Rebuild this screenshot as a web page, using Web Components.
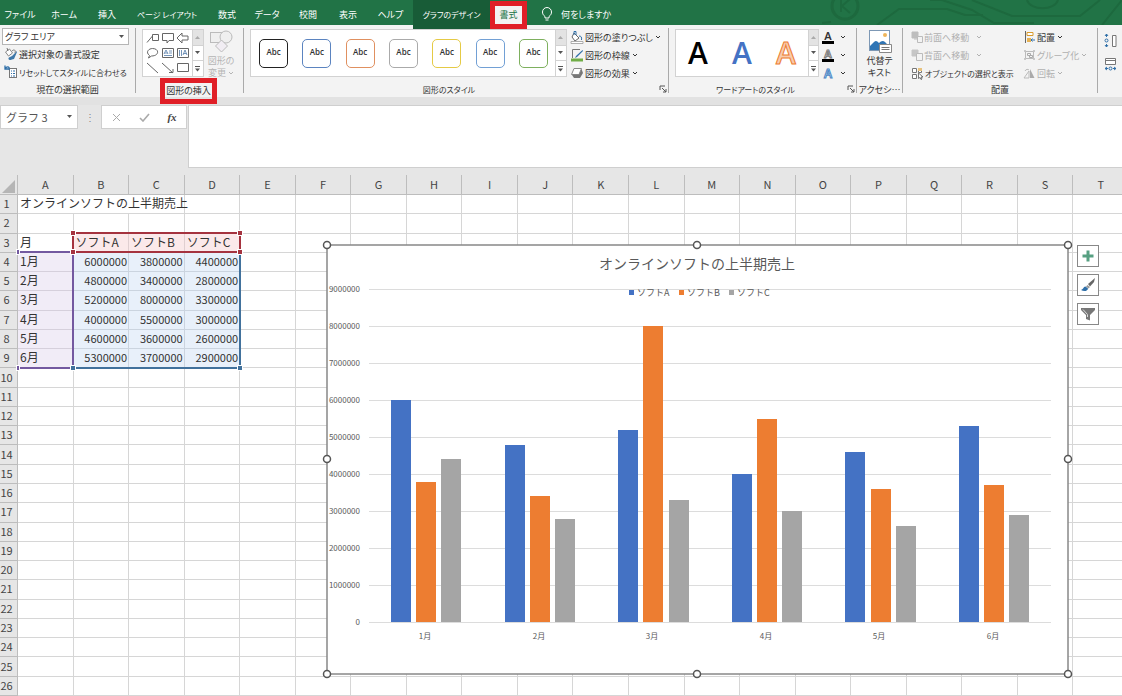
<!DOCTYPE html>
<html lang="ja">
<head>
<meta charset="utf-8">
<title>オンラインソフトの上半期売上</title>
<style>
  html { height: 100%; }
  body {
    margin: 0; min-height: 100%; display: flex; flex-direction: column; overflow: hidden;
    font-family: "Noto Sans CJK JP", sans-serif; font-size: 10px; color: #333; background: #fff;
  }
</style>
</head>
<body>
<tab-strip></tab-strip>
<ribbon-bar></ribbon-bar>
<formula-bar></formula-bar>
<work-sheet></work-sheet>

<script>
function define(name, css, html) {
  const template = document.createElement('template');
  customElements.define(name, class extends HTMLElement {
    constructor() {
      super();
      template.innerHTML = '<style>*{box-sizing:border-box}button,input,select{font:inherit;color:inherit;margin:0;border:0;background:none;padding:0;font-feature-settings:inherit}' + css + '</style>' + (typeof html === 'function' ? html(this) : html);
      this.attachShadow({ mode: 'open' }).append(template.content.cloneNode(true));
    }
  });
}

/* ---------- icons ---------- */
const ICONS = {
  bulb: [12, 16, '<path d="M4 11V9.500C2 8 1.500 6.500 1.500 5a4.500 4.500 0 0 1 9 0c0 1.500-.5 3-2.500 4.500V11z M4.500 13h3" fill="none" stroke="#fff"/>'],
  chevron: [6, 5, '<path d="M1 1l2 2 2-2" fill="none" stroke="currentColor"/>'],
  down: [6, 4, '<path d="M0 0h5L2.500 3z" fill="#555"/>'],
  up: [6, 4, '<path d="M0 3h5L2.500 0z" fill="#aaa"/>'],
  more: [6, 6, '<path d="M0 .5h5" stroke="#555"/><path d="M0 2.500h5L2.500 5.500z" fill="#555"/>'],
  format: [14, 14, '<path d="M1.500 5l4-3 3 4-4 3z" fill="#fff" stroke="#888"/><path d="M3 1l1 3" stroke="#777"/><path d="M13 4l-5 5-2 1 0 3 4-1 3-7z" fill="#3f78a8"/><path d="M8 4c2-2 4-1 3 2" stroke="#777" fill="none"/><circle cx="6" cy="11.500" r="1.500" fill="#3f78a8"/>'],
  reset: [14, 14, '<rect x="5.500" y="3.500" width="7" height="9" fill="#fff" stroke="#777"/><path d="M7 6h1M7 8.500h1M7 11h1M9 6h2M9 8.500h2M9 11h2" stroke="#2f6fa8"/><path d="M5 5C6 2 4 1 1.500 3M1 .5V4h3.500" fill="none" stroke="#2f6fa8" stroke-width="1.300"/>'],
  changeShape: [24, 24, '<rect x="1.500" y="2.500" width="12" height="10" fill="#efefef" stroke="#bbb"/><circle cx="17" cy="7" r="6" fill="#efefef" stroke="#bbb"/><path d="M12.500 10l6 6-6 6-6-6z" fill="#f1edf3" stroke="#bbb"/>'],
  launcher: [8, 8, '<path d="M1 5V1h5M3 3l4 4M7 4v3H4" fill="none" stroke="#555"/>'],
  fill: [14, 14, '<path d="M4 3l5 5-4 3-3-4z" fill="#fff" stroke="#666"/><path d="M4 5V1.500h2V5M9 6c2 0 3 1 2.500 4" fill="none" stroke="#2f6fa8"/><path d="M1 11.500h12v2H1z" fill="#fff" stroke="#999" stroke-width=".8"/>'],
  outline: [14, 14, '<path d="M2.500 10V1.500H10" fill="none" stroke="#777"/><path d="M12.500 2L6 8l-1 2 2-1 6-6z" fill="#2f6fa8"/><path d="M1 10.500h12v3H1z" fill="#70ad47"/>'],
  effect: [14, 12, '<path d="M2 8l3-6h6.500L13 6l-3 5H4z" fill="#777"/><path d="M1.500 7.500l2.500-6h7.500l-2.500 6z" fill="#fff" stroke="#888"/>'],
  altText: [26, 26, '<rect x="2.500" y="1.500" width="20" height="20" fill="#fff" stroke="#7d98b5"/><circle cx="18" cy="6" r="2" fill="#efb55a"/><path d="M3 21v-4l4-4c2-2 3-1 5 1 2-2 4-3 6-1l3 3v5z" fill="#2f75b5"/><path d="M12.500 15.500h12v8h-12z" fill="#fff" stroke="#888"/><path d="M14.500 18.500h8M14.500 20.500h8" stroke="#777"/>'],
  front: [12, 12, '<path d="M1 1h6v6H1zM3 8h3" fill="#bdbdbd" stroke="#bdbdbd"/><path d="M6.500 5.500h5v6h-5z" fill="#f3f3f3" stroke="#bbb"/>'],
  back: [12, 12, '<path d="M1 1h6v6H1z" fill="#c6c6c6" stroke="#c6c6c6"/><path d="M5.500 4.500h6v7h-6z" fill="#f3f3f3" stroke="#bbb"/>'],
  pane: [13, 13, '<path d="M1.500 1.500h4v4h-4zM7.500 2.500h3v3h-3zM1.500 7.500h4v4h-4z" fill="#fff" stroke="#777"/><path d="M7 1h4v3H7z" fill="#e7c27d"/><path d="M7.500 6v5.500l1.500-1 1 2 1-.5-1-2h2z" fill="#fff" stroke="#555" stroke-width=".8"/>'],
  align: [13, 12, '<path d="M2.500 0v12" stroke="#666"/><path d="M4 1.500h6v3H4z" fill="#fff" stroke="#d99a2b"/><path d="M4 7h4v4H4z" fill="#e7b254"/><path d="M12 9H8l1.500-1.500M8 9l1.500 1.500" fill="none" stroke="#2f6fa8"/>'],
  group: [13, 12, '<path d="M2.500 2.500h8v7h-8z" fill="none" stroke="#bbb"/><path d="M4.500 4.500h3v2h-3zM6.500 6.500h3v2h-3z" fill="none" stroke="#aaa"/><path d="M1.500 1.500h1v1h-1zM10.500 1.500h1v1h-1zM1.500 9.500h1v1h-1zM10.500 9.500h1v1h-1z" fill="#f3f3f3" stroke="#bbb"/>'],
  rotate: [13, 11, '<path d="M1 10h5V3z" fill="#f3f3f3" stroke="#bbb"/><path d="M7 10h4.500L7 1z" fill="#aaa"/><path d="M2 3c1-2 3-2 4-1" fill="none" stroke="#bbb"/>'],
  heightSize: [13, 15, '<path d="M2.500 1v3M1 3l1.500-2L4 3M2.500 11v3M1 12l1.500 2L4 12" fill="none" stroke="#2f6fa8"/><circle cx="2.500" cy="7.500" r="1.500" fill="none" stroke="#2f6fa8"/><path d="M8.500 2.500h3.500v11H8.500z" fill="#fff" stroke="#777"/>'],
  widthSize: [13, 15, '<path d="M1.500 1.500h10v6h-10zM1.500 3.500h10" fill="#fff" stroke="#777"/><path d="M1 11.500h3M9 11.500h3M3 10l-2 1.500L3 13M10 10l2 1.500-2 1.500" fill="none" stroke="#2f6fa8"/><circle cx="6.500" cy="11.500" r="1.500" fill="none" stroke="#2f6fa8"/>'],
  cancel: [9, 9, '<path d="M1 1l7 7M8 1L1 8" stroke="#aaa"/>'],
  check: [11, 9, '<path d="M1 5l3 3 6-7" fill="none" stroke="#aaa" stroke-width="1.600"/>'],
  plus: [14, 14, '<path d="M5.500 1.500h3v4h4v3h-4v4h-3v-4h-4v-3h4z" fill="#57a082"/>'],
  brush: [16, 16, '<path d="M15 1L8 7l2 2.500L14 5z" fill="#666"/><path d="M7.500 8L10 10 8.500 11.500 6 9.500z" fill="#999"/><path d="M5.500 9.500C3 10 4 12 1 13c3 2 7 1 7-1.500z" fill="#2f6fa8"/>'],
  filter: [16, 14, '<path d="M1 1h14v2L10 8v5.500L6 12V8L1 3z" fill="#777"/><path d="M3 2.500L7.500 7.500V10" fill="none" stroke="#ddd"/>'],
  lineCallout: [14, 12, '<path d="M6.500 2.500h6v6h-6zM6.500 4L1 10.500" fill="none" stroke="#666"/>'],
  rectCallout: [14, 12, '<path d="M1.500 1.500h11v7H8l-2 2.500V8.500H1.500z" fill="none" stroke="#666"/>'],
  arrowLeft: [14, 12, '<path d="M1 6l5-5v3h6v4H6v3z" fill="none" stroke="#666"/>'],
  bubble: [14, 12, '<path d="M3.500 8.500C-1 5 3 1.500 6.500 1.500c7 0 7 7.500-1 7.500L2.500 11z" fill="none" stroke="#666"/>'],
  textBox: [14, 12, '<path d="M1.500 1.500h11v9h-11z" fill="#fff" stroke="#666"/><path d="M3 7l2-4 2 4M3.500 6h3M8 4h3M8 6h3M3 8.500h8" fill="none" stroke="#537ba8" stroke-width=".8"/>'],
  verticalText: [14, 12, '<path d="M1.500 1.500h11v9h-11z" fill="#fff" stroke="#666"/><path d="M7 8l2-5 2 5M7.500 6.500h3M3.500 3v6M5.500 3v6" fill="none" stroke="#537ba8" stroke-width=".8"/>'],
  line: [14, 12, '<path d="M1 1l11 10" stroke="#666"/>'],
  lineArrow: [14, 12, '<path d="M1 1l11 10M8 10.500h4V7" fill="none" stroke="#666"/>'],
  rect: [14, 12, '<path d="M1.500 1.500h11v8h-11z" fill="none" stroke="#666"/>']
};
define('ui-icon', ':host{display:inline-flex;flex:none}svg{display:block}', el => {
  const [w, h, body] = ICONS[el.getAttribute('name')];
  return `<svg width="${w}" height="${h}" viewBox="0 0 ${w} ${h}" aria-hidden="true">${body}</svg>`;
});

/* ---------- tab strip ---------- */
define('tab-strip', `
  :host{display:block;position:relative;height:25px;flex:none;background:#217346;color:#fff;font-size:9px;font-feature-settings:"palt";z-index:2}
  .art{position:absolute;right:0;top:0}
  nav{position:relative;display:grid;grid-template-columns:40px 48px 38px 82px 38px 42px 40px 40px 45px 77px 37px auto;height:25px}
  button{display:flex;align-items:center;justify-content:center;white-space:nowrap}
  .kana{font-size:8px}
  .context{background:#185c37}
  .active{background:#f3f3f3;color:#217346;border:5px solid #e01f27;height:28px;margin-top:1px;padding-bottom:2px}
  .ask{justify-content:flex-start;gap:8px;padding-left:14px}
`, `
  <svg class="art" width="300" height="25" aria-hidden="true"><g fill="none" stroke="#1d693e" stroke-width="3">
    <circle cx="23" cy="6" r="13"/><path d="M19-1v13M28-1l-8 7 8 7" stroke-width="2"/><path d="M0 23l9-1M55 25l22-16h48l18 6h18M108 0h12l30 10 22 13h40M150 0l40 16h68l20-16M205 0c3 11 28 11 31 0M280 25l20-25" stroke-width="2"/></g></svg>
  <nav aria-label="リボン">
    <button>ファイル</button><button>ホーム</button><button>挿入</button><button class="kana">ページ レイアウト</button><button>数式</button><button>データ</button><button>校閲</button><button>表示</button><button>ヘルプ</button><button class="context kana">グラフのデザイン</button><button class="active">書式</button><button class="ask"><ui-icon name="bulb"></ui-icon>何をしますか</button>
  </nav>`);

/* ---------- ribbon parts ---------- */
define('ribbon-group', `
  :host{display:flex;flex-direction:column;flex:none;box-sizing:border-box;position:relative;border-right:1px solid #aaa;margin:3px 0 4px}
  .content{height:54px;flex:none;display:flex;align-items:flex-start}
  .label{flex:none;height:16px;line-height:16px;white-space:nowrap;display:flex;justify-content:center}
  :host([marked]) .label{width:57px;height:26px;border:5px solid #e01f27;margin:-4px 0 -10px 24px;line-height:16px}
  :host([launcher]) .label{font-size:8px;padding-right:14px}
  .launch{position:absolute;right:1px;bottom:0;line-height:0}
  :host(:not([launcher])) .launch{display:none}
`, el => `<div class="content"><slot></slot></div><div class="label">${el.getAttribute('label') || ''}</div>
  <button class="launch" aria-label="詳細"><ui-icon name="launcher"></ui-icon></button>`);

define('tool-button', `
  :host{display:block}
  button{display:flex;align-items:center;gap:1px;height:18px;white-space:nowrap}
  button:disabled{color:#b0b0b0}
  .arrow{margin-left:var(--arrow-gap,1px)}
  :host(:not([menu])) .arrow{display:none}
`, el => `<button ${el.hasAttribute('off') ? 'disabled' : ''}><ui-icon name="${el.getAttribute('icon')}"></ui-icon><slot></slot><ui-icon class="arrow" name="chevron"></ui-icon></button>`);

define('gallery-box', `
  :host{display:flex;box-sizing:border-box;border:1px solid #d2d2d2;background:#fff;height:48px;flex:none}
  .items{flex:1;display:flex;align-items:center}
  .scroll{width:11px;display:grid;grid-template-rows:16px 15px 15px;border-left:1px solid #d2d2d2}
  button{display:flex;align-items:center;justify-content:center;border-bottom:1px solid #d2d2d2}
  button:first-child{background:#e3e3e3}button:last-child{border:0}
`, `<div class="items"><slot></slot></div><div class="scroll">
  <button aria-label="前へ"><ui-icon name="up"></ui-icon></button><button aria-label="次へ"><ui-icon name="down"></ui-icon></button><button aria-label="その他"><ui-icon name="more"></ui-icon></button></div>`);

define('style-tile', `:host{display:block}
  button{width:29px;height:29px;border:1px solid var(--c);border-radius:5px;background:#fff;font:600 8px "Open Sans",sans-serif;color:#333;display:flex;align-items:center;justify-content:center;padding-bottom:3px}`,
  '<button>Abc</button>');

define('text-style', `:host{display:block}
  button{display:flex;align-items:center;gap:6px;height:18px}
  span{display:flex;flex-direction:column;align-items:center;width:12px;height:13px;font:600 11px/10px "Noto Sans",sans-serif;border-bottom:3px solid #000}
  .hollow{color:#fff;-webkit-text-stroke:1px #777}.glow{color:#fff;-webkit-text-stroke:1px #4a86c5;border:0;font-size:12px;line-height:13px}`,
  el => `<button aria-label="${el.getAttribute('label')}"><span class="${el.getAttribute('kind')}">A</span><ui-icon name="chevron"></ui-icon></button>`);

/* ---------- ribbon ---------- */
define('ribbon-bar', `
  :host{display:flex;position:relative;z-index:1;flex:none;height:72px;background:#f3f3f3;border-bottom:8px solid #e2e2e2;font-feature-settings:"palt";font-size:9px}
  .col{display:flex;flex-direction:column;flex:none}
  .select{position:relative;width:127px;height:17px;margin-left:2px}
  .select select{appearance:none;width:100%;height:100%;border:1px solid #b5b5b5;background:#fff;padding-left:2px}
  .select ui-icon{position:absolute;right:4px;top:7px}
  .first tool-button{margin-left:4px}
  .kana{font-size:8px}
  .g1{width:136px}.g2{width:108px}.g3{width:425px}.g4{width:188px}.g5{width:46px}.g6{width:195px}.g7{flex:1;border:0;overflow:hidden}
  .shapes{width:62px;margin:1px 0 0 6px}
  .grid{display:grid;grid-template-columns:repeat(3,15px);grid-template-rows:repeat(3,15px);padding-left:3px;align-items:center}
  .grid button{display:flex}
  .change{display:flex;flex-direction:column;align-items:center;margin-left:3px;color:#b5b5b5;line-height:12px;width:28px;text-align:left;padding-top:2px}
  .change ui-icon{margin-bottom:1px}
  .change span{display:block;white-space:nowrap}
  .styles{width:317px;margin:1px 0 0 6px}
  .tiles{display:grid;grid-template-columns:repeat(7,29px);justify-content:space-between;width:289px;margin-left:8px}
  .fx{margin-left:3px}
  .art{width:144px;margin:1px 0 0 6px}
  .letters{display:grid;grid-template-columns:repeat(3,44px);font:600 30px/44px "Open Sans",sans-serif}
  .letters button{height:44px;color:#000}
  .letters .blue{color:#4472c4}.letters .orange{color:#f8cbad;-webkit-text-stroke:1px #ed7d31}
  .alt{display:flex;flex-direction:column;align-items:center;line-height:12px;width:45px;padding-top:1px}
  .arr{width:120px;padding-left:8px;--arrow-gap:6px}
  .last{display:grid;grid-template-columns:13px 40px;gap:6px;row-gap:6px;padding:3px 0 0 6px;align-items:center}
  .last input{width:40px;height:18px;border:1px solid #b5b5b5;background:#fff}
`, `
  <ribbon-group class="g1" label="現在の選択範囲"><div class="col first">
    <div class="select"><select aria-label="グラフ要素"><option>グラフ エリア</option></select><ui-icon name="down"></ui-icon></div>
    <tool-button icon="format">選択対象の書式設定</tool-button>
    <tool-button class="kana" icon="reset">リセットしてスタイルに合わせる</tool-button></div></ribbon-group>
  <ribbon-group class="g2" label="図形の挿入" marked>
    <gallery-box class="shapes"><div class="grid">${['lineCallout','rectCallout','arrowLeft','bubble','textBox','verticalText','line','lineArrow','rect'].map(n => `<button aria-label="${n}"><ui-icon name="${n}"></ui-icon></button>`).join('')}</div></gallery-box>
    <button class="change" disabled><ui-icon name="changeShape"></ui-icon><span>図形の</span><span>変更 <ui-icon name="chevron"></ui-icon></span></button></ribbon-group>
  <ribbon-group class="g3" label="図形のスタイル" launcher>
    <gallery-box class="styles"><div class="tiles">${['#222','#5b84c0','#e09060','#aaa','#e5ca45','#72a0d5','#7eb05e'].map(c => `<style-tile style="--c:${c}"></style-tile>`).join('')}</div></gallery-box>
    <div class="col fx"><tool-button icon="fill" menu>図形の塗りつぶし</tool-button><tool-button icon="outline" menu>図形の枠線</tool-button><tool-button icon="effect" menu>図形の効果</tool-button></div></ribbon-group>
  <ribbon-group class="g4" label="ワードアートのスタイル" launcher>
    <gallery-box class="art"><div class="letters"><button>A</button><button class="blue">A</button><button class="orange">A</button></div></gallery-box>
    <div class="col fx"><text-style label="文字の塗りつぶし"></text-style><text-style kind="hollow" label="文字の輪郭"></text-style><text-style kind="glow" label="文字の効果"></text-style></div></ribbon-group>
  <ribbon-group class="g5" label="アクセシ…"><button class="alt"><ui-icon name="altText"></ui-icon><span>代替テ<br>キスト</span></button></ribbon-group>
  <ribbon-group class="g6" label="配置">
    <div class="col arr"><tool-button icon="front" off menu>前面へ移動</tool-button><tool-button icon="back" off menu>背面へ移動</tool-button><tool-button class="kana" icon="pane">オブジェクトの選択と表示</tool-button></div>
    <div class="col"><tool-button icon="align" menu>配置</tool-button><tool-button icon="group" off menu>グループ化</tool-button><tool-button icon="rotate" off menu>回転</tool-button></div></ribbon-group>
  <ribbon-group class="g7"><div class="last"><ui-icon name="heightSize"></ui-icon><input aria-label="高さ"><ui-icon name="widthSize"></ui-icon><input aria-label="幅"></div></ribbon-group>`);

/* ---------- formula bar ---------- */
define('formula-bar', `
  :host{display:flex;flex:none;height:70px;background:#e6e6e6;align-items:flex-start}
  .name{display:flex;align-items:center;width:78px;height:24px;background:#fff;border:1px solid #cfcfcf;padding:0 4px 0 5px}
  .name input{flex:1;width:0;font-size:11px;color:#555}
  .dots{width:23px;text-align:center;line-height:24px;color:#888}
  .actions{display:grid;grid-template-columns:repeat(3,28px);height:24px;width:86px;background:#fff;border:1px solid #cfcfcf}
  .actions button{display:flex;align-items:center;justify-content:center}
  .actions .fx{font:italic 700 11px "Liberation Serif",serif;color:#444}
  .value{flex:1;height:63px;margin-left:1px;background:#fff;border:1px solid #cfcfcf;border-right:0;resize:none;outline:0}
`, `<div class="name"><input aria-label="名前ボックス" value="グラフ 3"><ui-icon name="down"></ui-icon></div><div class="dots">⋮</div>
  <div class="actions"><button aria-label="キャンセル"><ui-icon name="cancel"></ui-icon></button><button aria-label="入力"><ui-icon name="check"></ui-icon></button><button class="fx">fx</button></div>
  <textarea class="value" aria-label="数式バー"></textarea>`);

/* ---------- chart ---------- */
const MONTHS = ['1月','2月','3月','4月','5月','6月'];
const SERIES = [
  ['ソフトA', '#4472c4', [6000000,4800000,5200000,4000000,4600000,5300000]],
  ['ソフトB', '#ed7d31', [3800000,3400000,8000000,5500000,3600000,3700000]],
  ['ソフトC', '#a5a5a5', [4400000,2800000,3300000,3000000,2600000,2900000]]
];
function chartMarkup() {
  const base = 377, unit = 37 / 1e6 * 0.9985, left = 42, step = 113.6;
  let s = '';
  for (let i = 0; i <= 9; i++) {
    const y = Math.round(base - i * 1e6 * unit);
    s += `<path d="M${left} ${y + .5}H724" stroke="#dcdcdc"/><text x="33" y="${y + 3}" text-anchor="end" font-size="8">${i * 1e6}</text>`;
  }
  MONTHS.forEach((m, i) => {
    SERIES.forEach(([, color, values], k) => {
      const h = Math.round(values[i] * unit);
      s += `<rect x="${Math.round(64 + i * step + k * 25.2)}" y="${base - h}" width="20" height="${h}" fill="${color}"/>`;
    });
    s += `<text x="${Math.round(98 + i * step)}" y="394" text-anchor="middle" font-size="8">${m}</text>`;
  });
  SERIES.forEach(([name, color], k) => {
    s += `<rect x="${302 + k * 50}" y="45" width="5" height="5" fill="${color}"/><text x="${310 + k * 50}" y="51" font-size="9">${name}</text>`;
  });
  [0, 370, 741].forEach(x => [0, 214, 429].forEach(y => {
    if (x !== 370 || y !== 214) s += `<circle cx="${x}" cy="${y}" r="3.500" fill="#fff" stroke="#555" stroke-width="1.500"/>`;
  }));
  return `<svg width="741" height="429" viewBox="0 0 741 429" role="img" aria-label="オンラインソフトの上半期売上">
    <rect width="741" height="429" fill="#fff" stroke="#888" stroke-width="1.500"/>
    <g fill="#595959"><text x="370" y="24" text-anchor="middle" font-size="14">オンラインソフトの上半期売上</text>${s}</g></svg>`;
}
define('sales-chart', ':host{display:block}svg{display:block;overflow:visible}', chartMarkup);
define('chart-tools', ':host{display:grid;gap:7px}button{width:22px;height:22px;border:1px solid #888;background:#fff;display:flex;align-items:center;justify-content:center}',
  '<button aria-label="グラフ要素"><ui-icon name="plus"></ui-icon></button><button aria-label="グラフ スタイル"><ui-icon name="brush"></ui-icon></button><button aria-label="グラフ フィルター"><ui-icon name="filter"></ui-icon></button>');

/* ---------- worksheet ---------- */
function sheetMarkup() {
  const cols = 'ABCDEFGHIJKLMNOPQRST'.split('');
  let rows = '';
  for (let r = 1; r <= 26; r++) {
    let cells = '';
    for (let c = 0; c < 20; c++) {
      let text = '', cls = '';
      if (r === 1 && c === 0) { cells += '<td colspan="3">オンラインソフトの上半期売上</td>'; c = 2; continue; }
      if (r === 3 && c === 0) text = '月';
      if (r === 3 && c > 0 && c < 4) { text = SERIES[c - 1][0]; cls = 'head'; }
      if (r > 3 && r < 10 && c === 0) { text = MONTHS[r - 4]; cls = 'month'; }
      if (r > 3 && r < 10 && c > 0 && c < 4) { text = SERIES[c - 1][2][r - 4]; cls = 'num'; }
      cells += `<td class="${cls}">${text}</td>`;
    }
    rows += `<tr><th scope="row">${r}</th>${cells}</tr>`;
  }
  return `<table><thead><tr><th class="corner"><svg width="13" height="13" aria-hidden="true"><path d="M13 0v13H0z" fill="#b5b5b5"/></svg></th>${cols.map(c => `<th scope="col">${c}</th>`).join('')}</tr></thead><tbody>${rows}</tbody></table>
    <div class="range months"><i></i><i></i><i></i><i></i></div><div class="range values"><i></i><i></i><i></i><i></i></div><div class="range names"><i></i><i></i><i></i><i></i></div>
    <sales-chart></sales-chart><chart-tools></chart-tools>`;
}
define('work-sheet', `
  :host{display:block;position:relative;flex:1;overflow:hidden;background:#fff}
  table{border-collapse:separate;border-spacing:0;table-layout:fixed;width:calc(100% + 7px);height:calc(100vh - 175px)}
  td,th{padding:0 0 2px;border:0 solid #d6d6d6;border-width:0 1px 1px 0;white-space:nowrap;line-height:14px}
  th{background:#e6e6e6;font-weight:400;font-size:11px;color:#444;border-color:#bdbdbd}
  thead th{height:20px}
  tbody th{padding-right:4px}
  th:first-child{width:18px}
  .corner{padding:3px 2px 0 0;line-height:0;text-align:right}
  .corner svg{display:inline-block}
  td{font-size:12px;padding-left:2px;color:#333}
  .head{background:#fbe9ea;border-color:#e0cfd1}
  .month{background:#f1ecf7;border-color:#d6d0dc}
  .num{background:#e8f0fa;border-color:#cbd4df;font-size:11px;text-align:right;padding-right:1px}
  .range{position:absolute;border:2px solid var(--c)}
  .months{--c:#7359a0;left:17px;top:76px;width:57px;height:118px;border-left:0}
  .values{--c:#41719c;left:72px;top:76px;width:169px;height:118px;border-left-color:#7359a0}
  .names{--c:#a5333f;left:72px;top:57px;width:169px;height:21px}
  i{position:absolute;width:4px;height:4px;background:var(--c);outline:1px solid #fff}
  i:nth-child(1){left:-3px;top:-3px}i:nth-child(2){right:-3px;top:-3px}i:nth-child(3){left:-3px;bottom:-3px}i:nth-child(4){right:-3px;bottom:-3px}
  .months i:nth-child(odd){left:0;width:2px}
  sales-chart{position:absolute;left:327px;top:70px}
  chart-tools{position:absolute;left:1077px;top:70px}
`, sheetMarkup);
</script>
</body>
</html>
